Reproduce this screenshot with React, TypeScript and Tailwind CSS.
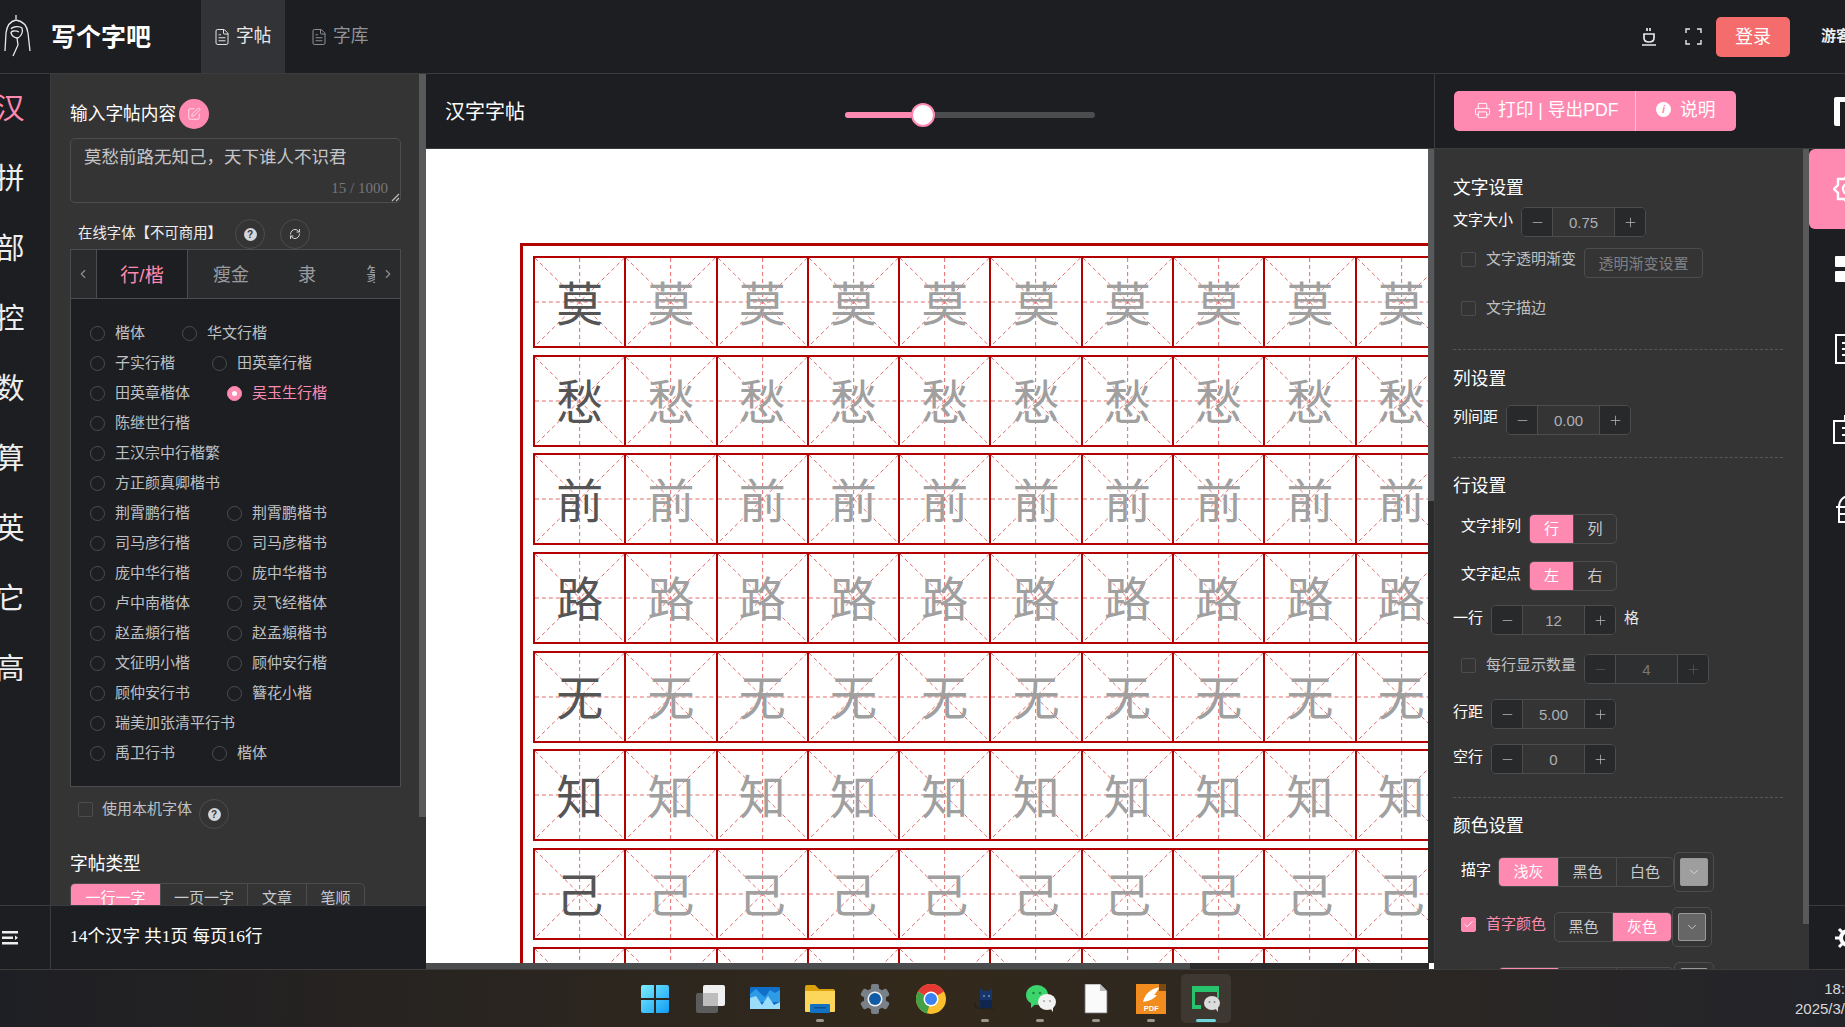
import React from "react";
import { Check, ChevronDown, ChevronLeft, ChevronRight, FileText, Minus, Plus, Printer, RefreshCw, SquarePen } from "lucide-react";

const sans = "[font-family:'Liberation_Sans','Noto_Sans_CJK_SC',sans-serif]";

const rail = ["汉", "拼", "部", "控", "数", "算", "英", "它", "高"];
const chars = ["莫", "愁", "前", "路", "无", "知", "己", ""];
const cols = [0, 1, 2, 3, 4, 5, 6, 7, 8, 9, 10];

const fontRows: string[][] = [
  ["楷体", "华文行楷"],
  ["子实行楷", "田英章行楷"],
  ["田英章楷体", "吴玉生行楷"],
  ["陈继世行楷"],
  ["王汉宗中行楷繁"],
  ["方正颜真卿楷书"],
  ["荆霄鹏行楷", "荆霄鹏楷书"],
  ["司马彦行楷", "司马彦楷书"],
  ["庞中华行楷", "庞中华楷书"],
  ["卢中南楷体", "灵飞经楷体"],
  ["赵孟頫行楷", "赵孟頫楷书"],
  ["文征明小楷", "顾仲安行楷"],
  ["顾仲安行书", "簪花小楷"],
  ["瑞美加张清平行书"],
  ["禹卫行书", "楷体"],
];

const HelpDot = () => (
  <div className="w-[30px] h-[30px] shrink-0 rounded-full border border-[#4c4d4f] flex items-center justify-center">
    <div className="w-[13px] h-[13px] rounded-full bg-[#d5d6da] text-[#333] text-[10px] font-bold leading-[13px] text-center">?</div>
  </div>
);

const Box = ({ on }: { on?: boolean }) => (
  <div className={`w-[15px] h-[15px] shrink-0 rounded-[2px] border flex items-center justify-center ${on ? "bg-[#ff8ab1] border-[#ff8ab1]" : "border-[#4c4d4f]"}`}>
    {on && <Check size={11} color="#fff" />}
  </div>
);

const Stepper = ({ value, dim }: { value: string; dim?: boolean }) => (
  <div className="w-[125px] h-[30px] shrink-0 flex border border-[#4c4d4f] rounded-[5px] overflow-hidden">
    <div className="w-[30px] bg-[#27292a] flex items-center justify-center">
      <Minus size={15} strokeWidth={1.2} color={dim ? "#555" : "#bbb"} />
    </div>
    <div className={`flex-1 border-x border-[#4c4d4f] text-center text-[15px] leading-[29px] ${dim ? "text-[#777] bg-[#2e2f30]" : "text-[#aeb0b3]"}`}>{value}</div>
    <div className="w-[30px] bg-[#27292a] flex items-center justify-center">
      <Plus size={15} strokeWidth={1.2} color={dim ? "#555" : "#bbb"} />
    </div>
  </div>
);

const Seg = ({ items, active, w }: { items: string[]; active: number; w: number[] }) => (
  <div className="h-[30px] shrink-0 flex border border-[#4c4d4f] rounded-[5px] overflow-hidden text-[15px] leading-[28px] text-center text-[#c8cacd]">
    {items.map((t, i) => (
      <div key={i} style={{ width: w[i] }} className={`${i === active ? "bg-[#ff8ab1] text-white" : ""} ${i > 0 ? "border-l border-[#4c4d4f]" : ""}`}>{t}</div>
    ))}
  </div>
);

const Swatch = ({ bg }: { bg: string }) => (
  <div className="w-[40px] h-[40px] shrink-0 border border-[#4c4d4f] rounded-[5px] flex items-center justify-center">
    <div style={{ background: bg }} className="w-[28px] h-[28px] rounded-[2px] border border-[#999] flex items-center justify-center">
      <ChevronDown size={14} strokeWidth={1.2} color="#eee" />
    </div>
  </div>
);

const Title = ({ children, mt }: { children: string; mt: string }) => (
  <div className={`${mt} h-[24px] text-[17.7px] leading-[26px] text-white`}>{children}</div>
);

const Dash = ({ mt }: { mt: string }) => <div className={`${mt} w-[330px] border-t border-dashed border-[#55565a]`} />;

const Cell = ({ ch, first }: { ch: string; first: boolean }) => (
  <div className="relative w-[91.3px] h-[88px] shrink-0 border-r-2 border-[#b30000] flex items-center justify-center">
    <svg className="absolute inset-0 w-full h-full" viewBox="0 0 90 88" preserveAspectRatio="none">
      <g stroke="#e26a6a" strokeWidth="1" strokeDasharray="4 3" fill="none">
        <path d="M0 44H90M45 0V88M0 0L90 88M90 0L0 88" />
      </g>
    </svg>
    <span className={`relative text-[47px] leading-none mt-[4px] ${first ? "text-[#555]" : "text-[#a0a0a0]"}`}>{ch}</span>
  </div>
);

const Logo = () => (
  <svg width="28" height="44" viewBox="0 0 28 44" fill="none" stroke="#e8e8e8" strokeWidth="1.3">
    <path d="M12 0V4M2 18C3 10 7 6 12 5C18 6 23 10 24 18L26 36M2 18L1 36" />
    <path d="M7 14C9 11 16 11 18 13C19 16 18 21 14 23C11 23 8 21 7 18C7 16 11 15 15 17M13 23L14 30L9 41" />
  </svg>
);

const TaskIcon = ({ id }: { id: string }) => {
  if (id === "win")
    return (
      <svg width="30" height="30" viewBox="0 0 30 30">
        <defs>
          <linearGradient id="wg" x1="0" y1="0" x2="1" y2="1">
            <stop offset="0" stopColor="#7eeeff" />
            <stop offset="1" stopColor="#0f9cf5" />
          </linearGradient>
        </defs>
        <path fill="url(#wg)" d="M1 3a2 2 0 0 1 2-2h11v13H1zM16 1h11a2 2 0 0 1 2 2v11H16zM1 16h13v13H3a2 2 0 0 1-2-2zM16 16h13v11a2 2 0 0 1-2 2H16z" />
      </svg>
    );
  if (id === "task")
    return (
      <svg width="30" height="30" viewBox="0 0 30 30">
        <rect x="1" y="9" width="22" height="20" rx="2" fill="#5c5c5c" />
        <rect x="8" y="1" width="22" height="21" rx="2" fill="#f0f0f0" />
        <rect x="8" y="9" width="15" height="13" fill="#bdbdbd" />
      </svg>
    );
  if (id === "widget")
    return (
      <svg width="30" height="30" viewBox="0 0 30 30">
        <rect y="3" width="30" height="22" rx="1" fill="#0f6fc9" />
        <path d="M0 10L6 5L10 9L15 13L20 6L25 9L30 6V18H0z" fill="#2e9be6" />
        <path d="M0 14L6 12L12 21L18 12L24 21L30 18V25H0z" fill="#9bdcfb" />
      </svg>
    );
  if (id === "folder")
    return (
      <svg width="30" height="30" viewBox="0 0 30 30">
        <path d="M0 3a2 2 0 0 1 2-2h8l4 4h14a2 2 0 0 1 2 2v3H0z" fill="#dba20c" />
        <path d="M0 7h30v20a1 1 0 0 1-1 1H1a1 1 0 0 1-1-1z" fill="#fbd65a" />
        <rect x="5" y="20" width="20" height="9" rx="1" fill="#1273c4" />
        <rect x="9" y="23" width="12" height="1.5" fill="#0b4f8f" />
      </svg>
    );
  if (id === "gear")
    return (
      <svg width="30" height="30" viewBox="0 0 30 30">
        <g fill="#79808a">
          <circle cx="15" cy="15" r="11" />
          <rect x="11" y="0" width="8" height="30" rx="2" />
          <rect x="11" y="0" width="8" height="30" rx="2" transform="rotate(60 15 15)" />
          <rect x="11" y="0" width="8" height="30" rx="2" transform="rotate(120 15 15)" />
        </g>
        <circle cx="15" cy="15" r="7.5" fill="#f2f2f2" />
        <circle cx="15" cy="15" r="6" fill="#0f5ba8" />
      </svg>
    );
  if (id === "chrome")
    return (
      <svg width="30" height="30" viewBox="0 0 30 30">
        <circle cx="15" cy="15" r="15" fill="#fbc02d" />
        <path d="M15 15L2 7.5A15 15 0 0 1 28 7.5z" fill="#e53935" />
        <path d="M15 15L2 7.5A15 15 0 0 0 11 29.5z" fill="#43a047" />
        <circle cx="15" cy="15" r="7.5" fill="#fff" />
        <circle cx="15" cy="15" r="6" fill="#3b82f0" />
      </svg>
    );
  if (id === "cat")
    return (
      <svg width="30" height="30" viewBox="0 0 30 30">
        <path d="M9 3L12 7H18L21 3V24H9z" fill="#16356b" />
        <path d="M9 16H21V24H9z" fill="#0f2650" />
        <path d="M4 19C4 25 6 25 24 25" stroke="#222" strokeWidth="1.2" fill="none" />
        <circle cx="13" cy="12" r="0.8" fill="#bcd" />
        <circle cx="18" cy="12" r="0.8" fill="#bcd" />
      </svg>
    );
  if (id === "wechat")
    return (
      <svg width="30" height="30" viewBox="0 0 30 30">
        <ellipse cx="11" cy="11" rx="11" ry="10" fill="#3cd56b" />
        <path d="M5 17L5 24L11 19z" fill="#3cd56b" />
        <circle cx="7.5" cy="9" r="1.3" fill="#1d8f45" />
        <circle cx="14" cy="9" r="1.3" fill="#1d8f45" />
        <ellipse cx="21" cy="18" rx="9" ry="8" fill="#f2f2f2" />
        <path d="M24 24L27 28L27 21z" fill="#f2f2f2" />
        <circle cx="18" cy="17" r="1.1" fill="#aaa" />
        <circle cx="24" cy="17" r="1.1" fill="#aaa" />
      </svg>
    );
  if (id === "file")
    return (
      <svg width="30" height="30" viewBox="0 0 30 30">
        <path d="M4 0H19L26 7V29H4z" fill="#fafafa" stroke="#777" strokeWidth="0.8" />
        <path d="M19 0V7H26z" fill="#bbb" />
      </svg>
    );
  if (id === "pdf")
    return (
      <div className="relative w-[30px] h-[30px] bg-[#f28c1e] flex flex-col items-center justify-end">
        <svg className="absolute top-[2px] left-[4px]" width="22" height="18" viewBox="0 0 22 18">
          <path d="M3 16C5 8 10 3 20 1C17 5 16 7 14 9L17 9C13 14 8 15 3 16z" fill="#fff" />
        </svg>
        <div className="absolute top-0 right-0 w-[7px] h-[7px] bg-[#7a4a12]" />
        <span className="relative text-[7.5px] font-bold leading-[11px] text-white">PDF</span>
      </div>
    );
  return (
    <svg width="30" height="30" viewBox="0 0 30 30">
      <path d="M1 2H28V8H4V21H10V25H1z" fill="#27c46d" />
      <path d="M26 8h2v6h-2z" fill="#27c46d" />
      <ellipse cx="21" cy="19" rx="8" ry="7" fill="#dcdcdc" />
      <path d="M24 24L27 28L27 21z" fill="#dcdcdc" />
      <circle cx="18.5" cy="18" r="1" fill="#888" />
      <circle cx="23.5" cy="18" r="1" fill="#888" />
    </svg>
  );
};

const task = [
  { id: "win" },
  { id: "task" },
  { id: "widget" },
  { id: "folder", dot: true },
  { id: "gear" },
  { id: "chrome" },
  { id: "cat", dot: true },
  { id: "wechat", dot: true },
  { id: "file", dot: true },
  { id: "pdf", dot: true },
  { id: "app", active: true },
];

export default function App() {
  return (
    <div className={`w-[1845px] h-[1027px] flex flex-col overflow-hidden bg-[#1d1e21] ${sans}`}>
      {/* app window */}
      <div className="h-[969px] flex flex-col shrink-0">
        <header className="h-[74px] shrink-0 flex items-center border-b border-[#3a3b3d] bg-[#1d1e21] overflow-hidden">
          <div className="w-[51px] pl-[4px] shrink-0"><Logo /></div>
          <div className="w-[150px] shrink-0 text-[25px] font-bold text-white leading-none pt-[2px]">写个字吧</div>
          <div className="w-[84px] h-full shrink-0 bg-[#323336] flex items-center pl-[12px] gap-[5px] text-[17.7px] text-[#e8e8e8]">
            <FileText size={18} strokeWidth={1.3} />字帖
          </div>
          <div className="h-full shrink-0 flex items-center pl-[25px] gap-[5px] text-[17.7px] text-[#909399]">
            <FileText size={18} strokeWidth={1.3} />字库
          </div>
          <div className="flex-1" />
          <svg className="shrink-0" width="16" height="18" viewBox="0 0 16 18" fill="none" stroke="#e8e8e8" strokeWidth="1.7">
            <path d="M6 0V3M9 0V3M3 6H13V10C13 13 11 14 8 14C5 14 3 13 3 10zM1 17H15" />
          </svg>
          <svg className="shrink-0 ml-[28px]" width="17" height="17" viewBox="0 0 17 17" fill="none" stroke="#e8e8e8" strokeWidth="1.4">
            <path d="M1 5V1H5M12 1H16V5M16 12V16H12M5 16H1V12" />
          </svg>
          <div className="ml-[14px] w-[74px] h-[40px] shrink-0 bg-[#f56c6c] rounded-[5px] text-white text-[18px] leading-[40px] text-center">登录</div>
          <div className="ml-[31px] w-[24px] shrink-0 whitespace-nowrap text-[15px] font-bold text-[#eee]">游客</div>
        </header>

        <div className="flex-1 flex min-h-0">
          {/* left column */}
          <div className="w-[426px] shrink-0 flex flex-col">
            <div className="flex-1 flex min-h-0">
              <nav className="w-[51px] shrink-0 border-r border-[#3a3b3d] overflow-hidden">
                {rail.map((c, i) => (
                  <div key={c} className={`w-[20px] h-[70px] pt-[2px] flex items-center justify-center whitespace-nowrap text-[29px] ${i === 0 ? "text-[#ff8ab1]" : "text-[#eee]"}`}>
                    <span className="shrink-0">{c}</span>
                  </div>
                ))}
              </nav>
              <aside className="w-[368px] shrink-0 bg-[#343435] px-[19px] overflow-hidden">
                <div className="mt-[25px] h-[30px] flex items-center">
                  <span className="text-[17.7px] text-white">输入字帖内容</span>
                  <div className="ml-[3px] w-[30px] h-[30px] rounded-full bg-[#ff8ab1] flex items-center justify-center">
                    <SquarePen size={14} color="#fff" strokeWidth={1.2} />
                  </div>
                </div>
                <div className="relative mt-[9px] w-[331px] h-[65px] border border-[#4c4d4f] rounded-[5px] pl-[13px] pt-[5px] text-[17.5px] leading-[26px] text-[#c4c5c8]">
                  莫愁前路无知己，天下谁人不识君
                  <div className="absolute right-[12px] bottom-[6px] text-[15px] leading-[16px] text-[#777] [font-family:'Liberation_Serif',serif]">15 / 1000</div>
                  <svg className="absolute right-0 bottom-0" width="9" height="9" viewBox="0 0 9 9" stroke="#bbb" strokeWidth="1.2">
                    <path d="M1 8L8 1M5 8L8 5" />
                  </svg>
                </div>
                <div className="mt-[16px] h-[30px] flex items-center pl-[8px]">
                  <span className="w-[157px] shrink-0 text-[14.4px] text-[#eee]">在线字体【不可商用】</span>
                  <HelpDot />
                  <div className="ml-[15px] w-[30px] h-[30px] rounded-full border border-[#4c4d4f] flex items-center justify-center">
                    <RefreshCw size={12} color="#d5d6da" />
                  </div>
                </div>

                {/* font picker */}
                <div className="w-[331px] h-[538px] border border-[#4c4d4f] bg-[#1d1e21]">
                  <div className="h-[49px] flex items-stretch bg-[#2a2b2d] border-b border-[#4c4d4f] overflow-hidden">
                    <div className="w-[26px] pr-[2px] shrink-0 flex items-center justify-center border-r border-[#4c4d4f]">
                      <ChevronLeft size={14} color="#8d8e91" />
                    </div>
                    <div className="w-[91px] -mb-[1px] shrink-0 bg-[#1d1e21] border-r border-[#4c4d4f] text-center text-[19px] leading-[51px] text-[#ff8ab1]">行/楷</div>
                    <div className="w-[86px] shrink-0 text-center text-[18px] leading-[51px] text-[#9a9b9e]">瘦金</div>
                    <div className="w-[66px] shrink-0 text-center text-[18px] leading-[51px] text-[#9a9b9e]">隶</div>
                    <div className="w-[35px] shrink-0 overflow-hidden text-[18px] leading-[51px] text-[#9a9b9e] whitespace-nowrap flex justify-end">
                      <span className="w-[9px] overflow-hidden block">篆</span>
                    </div>
                    <div className="w-[25px] shrink-0 flex items-center justify-center">
                      <ChevronRight size={14} color="#8d8e91" />
                    </div>
                  </div>
                  <div className="pt-[19px] pl-[19px]">
                    {fontRows.map((row, i) => (
                      <div key={i} className="h-[30px] flex items-center gap-[37px]">
                        {row.map((name) => {
                          const on = name === "吴玉生行楷";
                          return (
                            <div key={name} className={`flex items-center gap-[10px] text-[15px] ${on ? "text-[#ff8ab1]" : "text-[#bfc0c3]"}`}>
                              <div className={`w-[15px] h-[15px] rounded-full border flex items-center justify-center ${on ? "bg-[#ff8ab1] border-[#ff8ab1]" : "border-[#4c4d4f]"}`}>
                                {on && <div className="w-[5px] h-[5px] rounded-full bg-white" />}
                              </div>
                              {name}
                            </div>
                          );
                        })}
                      </div>
                    ))}
                  </div>
                </div>

                <div className="mt-[12px] h-[30px] flex items-center pl-[8px]">
                  <div className="pb-[9px]"><Box /></div>
                  <span className="ml-[9px] pb-[10px] text-[15px] text-[#bfc0c3]">使用本机字体</span>
                  <div className="ml-[7px]"><HelpDot /></div>
                </div>
                <Title mt="mt-[22px]">字帖类型</Title>
                <div className="mt-[8px]">
                  <div className="inline-flex">
                    <Seg items={["一行一字", "一页一字", "文章", "笔顺"]} active={0} w={[89, 87, 59, 58]} />
                  </div>
                </div>
              </aside>
              <div className="w-[7px] shrink-0 bg-[#343435]">
                <div className="w-full h-[743px] bg-[#58595b]" />
              </div>
            </div>
            <div className="h-[64px] shrink-0 flex border-t border-[#3a3b3d]">
              <div className="w-[51px] shrink-0 border-r border-[#3a3b3d] flex items-center pl-[2px]">
                <svg width="16" height="14" viewBox="0 0 16 14" fill="#eee">
                  <path d="M0 0H16V2.5H0zM0 5.5H11V8H0zM0 11H16V13.5H0zM13 4.5L16 6.8L13 9z" />
                </svg>
              </div>
              <div className="pl-[19px] pb-[2px] flex items-center text-[17.5px] text-white [font-family:'Liberation_Serif','Noto_Sans_CJK_SC',serif] whitespace-nowrap">14个汉字 共1页 每页16行</div>
            </div>
          </div>

          {/* center */}
          <main className="w-[1008px] shrink-0 flex flex-col min-w-0">
            <div className="h-[75px] shrink-0 flex items-center border-b border-[#3a3b3d] pl-[19px]">
              <div className="w-[400px] shrink-0 text-[20px] text-white pt-[1px]">汉字字帖</div>
              <div className="w-[250px] h-[6px] mt-[7px] shrink-0 rounded-full bg-[#4c4d4f] flex items-center">
                <div className="w-[66px] h-full rounded-l-full bg-[#ff8ab1]" />
                <div className="w-[24px] h-[24px] rounded-full bg-white border-2 border-[#ff8ab1]" />
              </div>
            </div>
            <div className="flex-1 flex min-h-0">
              <div className="w-[1002px] shrink-0 bg-white overflow-hidden">
                <div className="mt-[94px] ml-[94px] w-[1200px] border-[3px] border-[#b00000] p-[10px]">
                  {chars.map((ch, r) => (
                    <div key={r} className="h-[92px] mb-[6.67px] w-[1100px] flex border-2 border-[#b30000]">
                      {cols.map((c) => (
                        <Cell key={c} ch={ch} first={c === 0} />
                      ))}
                    </div>
                  ))}
                </div>
              </div>
              <div className="w-[6px] shrink-0 bg-[#2b2b2c]">
                <div className="w-full h-[352px] bg-[#58595b]" />
              </div>
            </div>
            <div className="h-[6px] shrink-0 flex bg-[#2b2b2c]">
              <div className="w-[764px] bg-[#4b4c4d]" />
              <div className="flex-1" />
              <div className="w-[5px] bg-white" />
            </div>
          </main>

          {/* right column */}
          <div className="flex-1 min-w-0 flex flex-col border-l border-[#3a3b3d] overflow-hidden">
            <div className="h-[75px] shrink-0 flex items-center border-b border-[#3a3b3d] pl-[19px]">
              <div className="w-[282px] h-[40px] shrink-0 rounded-[5px] bg-[#ff8ab1] flex items-center text-white text-[17.7px]">
                <div className="w-[182px] flex items-center pl-[20px] gap-[7px] border-r border-[#ffc3d8] h-full pb-[2px]">
                  <Printer size={17} strokeWidth={1.3} />打印 | 导出PDF
                </div>
                <div className="flex items-center pl-[20px] gap-[9px] pb-[2px]">
                  <div className="w-[15px] h-[15px] rounded-full bg-white text-[#ff8ab1] text-[11px] font-bold italic leading-[15px] text-center">i</div>
                  说明
                </div>
              </div>
              <div className="ml-[98px] w-[30px] h-[29px] shrink-0 bg-white rounded-[2px] flex">
                <div className="mt-[5px] ml-[6px] w-[24px] h-[24px] bg-[#1d1e21]" />
              </div>
            </div>
            <div className="flex-1 flex min-h-0">
              <aside className="w-[368px] shrink-0 bg-[#343435] pl-[18px] overflow-hidden">
                <Title mt="mt-[26px]">文字设置</Title>
                <div className="mt-[8px] flex items-center h-[30px]">
                  <span className="w-[68px] shrink-0 pb-[4px] text-[15px] text-white">文字大小</span>
                  <Stepper value="0.75" />
                </div>
                <div className="mt-[11px] flex items-center h-[30px] pl-[8px]">
                  <div className="pb-[8px]"><Box /></div>
                  <span className="ml-[10px] w-[98px] pb-[8px] text-[15px] text-[#bfc0c3]">文字透明渐变</span>
                  <div className="w-[119px] h-[30px] border border-[#4c4d4f] rounded-[4px] text-center text-[15px] leading-[30px] text-[#808184]">透明渐变设置</div>
                </div>
                <div className="mt-[15px] flex items-center h-[30px] pl-[8px]">
                  <Box />
                  <span className="ml-[10px] text-[15px] text-[#bfc0c3]">文字描边</span>
                </div>
                <Dash mt="mt-[26px]" />
                <Title mt="mt-[16px]">列设置</Title>
                <div className="mt-[15px] flex items-center h-[30px]">
                  <span className="w-[53px] shrink-0 pb-[6px] text-[15px] text-white">列间距</span>
                  <Stepper value="0.00" />
                </div>
                <Dash mt="mt-[22px]" />
                <Title mt="mt-[15px]">行设置</Title>
                <div className="mt-[17px] flex items-center h-[30px] pl-[8px]">
                  <span className="w-[68px] pb-[6px] text-[15px] text-white">文字排列</span>
                  <Seg items={["行", "列"]} active={0} w={[43, 43]} />
                </div>
                <div className="mt-[17px] flex items-center h-[30px] pl-[8px]">
                  <span className="w-[68px] pb-[4px] text-[15px] text-white">文字起点</span>
                  <Seg items={["左", "右"]} active={0} w={[43, 43]} />
                </div>
                <div className="mt-[14px] flex items-center h-[30px]">
                  <span className="w-[38px] shrink-0 pb-[4px] text-[15px] text-white">一行</span>
                  <Stepper value="12" />
                  <span className="ml-[8px] pb-[4px] text-[15px] text-[#e8e8e8]">格</span>
                </div>
                <div className="mt-[19px] flex items-center h-[30px] pl-[8px]">
                  <div className="pb-[8px]"><Box /></div>
                  <span className="ml-[10px] w-[98px] pb-[8px] text-[15px] text-[#bfc0c3]">每行显示数量</span>
                  <Stepper value="4" dim />
                </div>
                <div className="mt-[15px] flex items-center h-[30px]">
                  <span className="w-[38px] shrink-0 pb-[4px] text-[15px] text-white">行距</span>
                  <Stepper value="5.00" />
                </div>
                <div className="mt-[15px] flex items-center h-[30px]">
                  <span className="w-[38px] shrink-0 pb-[4px] text-[15px] text-white">空行</span>
                  <Stepper value="0" />
                </div>
                <Dash mt="mt-[23px]" />
                <Title mt="mt-[15px]">颜色设置</Title>
                <div className="mt-[15px] flex items-center h-[40px] pl-[8px]">
                  <span className="w-[37px] pb-[4px] text-[15px] text-white">描字</span>
                  <Seg items={["浅灰", "黑色", "白色"]} active={0} w={[59, 58, 57]} />
                  <Swatch bg="#9e9e9e" />
                </div>
                <div className="mt-[15px] flex items-center h-[40px] pl-[8px]">
                  <div className="pb-[6px]"><Box on /></div>
                  <span className="ml-[10px] w-[68px] pb-[6px] text-[15px] text-[#ff8ab1]">首字颜色</span>
                  <Seg items={["黑色", "灰色"]} active={1} w={[57, 59]} />
                  <Swatch bg="#666666" />
                </div>
                <div className="mt-[15px] flex items-center h-[40px] pl-[45px]">
                  <Seg items={["", "", ""]} active={0} w={[59, 58, 57]} />
                  <Swatch bg="#888888" />
                </div>
              </aside>
              <div className="w-[6px] shrink-0 bg-[#343435]">
                <div className="w-full h-[775px] bg-[#58595b]" />
              </div>
              <nav className="flex-1 min-w-0 flex flex-col overflow-hidden">
                <div className="flex-1">
                  <div className="h-[80px] bg-[#ff8ab1] rounded-l-[6px] flex items-center pl-[24px]">
                    <svg className="shrink-0" width="30" height="30" viewBox="0 0 30 30" fill="none" stroke="#fff" strokeWidth="2.4">
                      <path d="M15 1L19 5H25V11L29 15L25 19V25H19L15 29L11 25H5V19L1 15L5 11V5H11z" />
                      <circle cx="15" cy="15" r="5" />
                    </svg>
                  </div>
                  <div className="h-[80px] flex items-center pl-[26px]">
                    <svg className="shrink-0" width="24" height="26" viewBox="0 0 24 26" fill="#fff">
                      <rect width="24" height="11" rx="1" />
                      <rect y="15" width="24" height="11" rx="1" />
                    </svg>
                  </div>
                  <div className="h-[80px] flex items-center pl-[26px]">
                    <svg className="shrink-0" width="26" height="30" viewBox="0 0 26 30" fill="none" stroke="#fff" strokeWidth="2">
                      <path d="M1 1H25V29H1zM7 9H20M7 15H20M7 21H20" />
                    </svg>
                  </div>
                  <div className="h-[80px] flex items-center pl-[24px]">
                    <svg className="shrink-0" width="28" height="30" viewBox="0 0 28 30" fill="none" stroke="#fff" strokeWidth="2">
                      <path d="M1 7H27V29H1zM9 14H22M9 21H22M12 7V2H18" />
                    </svg>
                  </div>
                  <div className="h-[80px] flex items-center pl-[26px]">
                    <svg className="shrink-0" width="28" height="28" viewBox="0 0 28 28" fill="none" stroke="#fff" strokeWidth="2">
                      <path d="M1 12H27M4 12C4 5 9 1 14 1C19 1 24 5 24 12M4 12V27H24V12M4 19H24M13 1V27" />
                    </svg>
                  </div>
                </div>
                <div className="h-[64px] shrink-0 border-t border-[#3a3b3d] flex items-center pl-[26px]">
                  <svg className="shrink-0" width="26" height="26" viewBox="0 0 26 26" fill="none" stroke="#fff" strokeWidth="4">
                    <circle cx="13" cy="13" r="7" />
                    <path d="M13 0V5M13 21V26M0 13H5M21 13H26M4 4L7 7M19 19L22 22M22 4L19 7M7 19L4 22" strokeWidth="3" />
                  </svg>
                </div>
              </nav>
            </div>
          </div>
        </div>
      </div>

      {/* taskbar */}
      <footer className="h-[58px] shrink-0 flex items-center border-t border-[#3d3c3a] bg-gradient-to-r from-[#1e1f24] via-[#33291b] via-50% to-[#23242a] overflow-hidden">
        <div className="w-[627px] shrink-0" />
        {task.map((t) => (
          <div key={t.id} className="relative w-[55.2px] h-[49px] shrink-0 flex items-center justify-center">
            {t.active && <div className="absolute inset-y-0 left-[2px] w-[50px] rounded-[5px] bg-[#ffffff14]" />}
            <div className="relative"><TaskIcon id={t.id} /></div>
            {t.dot && <div className="absolute bottom-[1px] left-[23px] w-[8px] h-[3px] rounded-full bg-[#9a968e]" />}
            {t.active && <div className="absolute bottom-[1px] left-[17px] w-[20px] h-[3px] rounded-full bg-[#6fd5da]" />}
          </div>
        ))}
        <div className="flex-1 min-w-0 text-right text-[15px] leading-[20px] text-[#d8d8d8]">
          <div>18:</div>
          <div>2025/3/</div>
        </div>
      </footer>
    </div>
  );
}
